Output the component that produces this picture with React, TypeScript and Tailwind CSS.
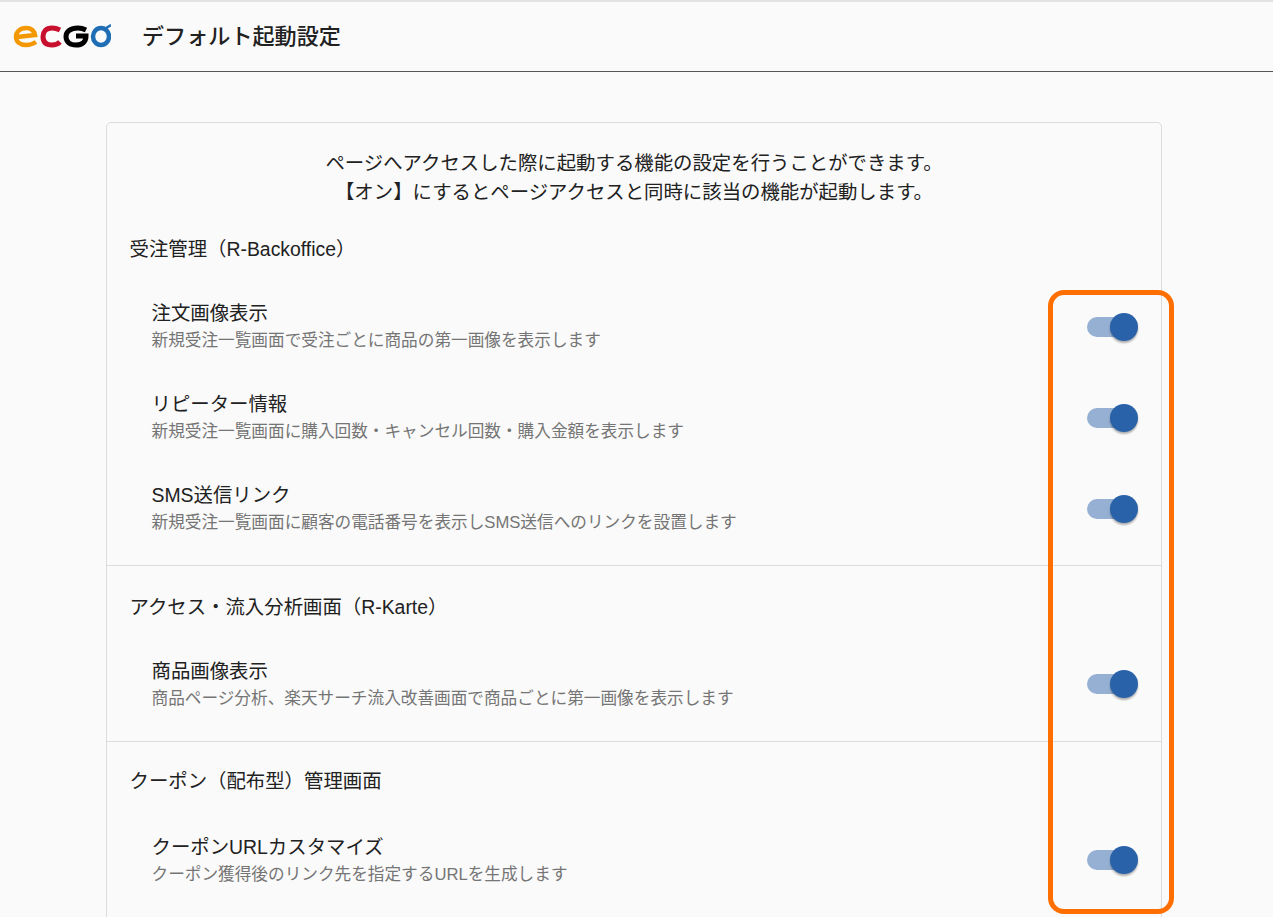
const Switch = () => (
  <div className="relative h-[20px] w-[51px] shrink-0">
    <div className="absolute left-[0px] top-[0px] h-[20px] w-[46px] rounded-full bg-[#95b0d3]" />
    <div className="absolute left-[23px] top-[-4px] h-[28px] w-[28px] rounded-full bg-[#2962a8] shadow-[0_2px_2px_rgba(0,0,0,0.3)]" />
  </div>
);

const Item = ({ title, desc, h = "h-[91px]", pt = "pt-[1px]" }: { title: string; desc: string; h?: string; pt?: string }) => (
  <div className={`flex ${h} items-start justify-between pl-[44.500px] pr-[23px]`}>
    <div className={`min-w-0 ${pt}`}>
      <div className="text-[19.4px] leading-[26px] text-[#212121]">{title}</div>
      <div className="mt-[3px] text-[16.65px] leading-[24px] text-[#757575]">{desc}</div>
    </div>
    <div className="mt-[17px]"><Switch /></div>
  </div>
);

const Heading = ({ children }: { children: string }) => (
  <div className="pl-[22.500px] text-[19.4px] leading-[26px] text-[#212121]">{children}</div>
);

export default function App() {
  return (
    <div
      className="relative h-[917px] overflow-hidden bg-[#fafafa]"
      style={{ fontFamily: '"Liberation Sans","Noto Sans CJK JP",sans-serif' }}
    >
      <header className="flex h-[72px] items-center border-t-[2px] border-b border-t-[#e2e2e0] border-b-[#555555] pl-[13px]">
        <svg width="98" height="26" viewBox="0 0 98 26" className="mb-[3px] shrink-0">
          <path d="M4 15 L22 13 C21 8 17 6 13 6 C7 6 3 10 3 14.500 C3 20 7 23 13 23 C17 23 20 22 23 20" fill="none" stroke="#f39800" strokeWidth="4.500" />
          <path d="M47 8 C44 6.500 41 6 39 6 C33 6 30 10 30 14.500 C30 20 33 23 39 23 C42 23 45 22 47 20" fill="none" stroke="#c8102e" strokeWidth="5" />
          <path d="M73 8 C70 6.500 68 6 65 6 C57 6 53 10 53 14.500 C53 20 57 23 63 23 C69 23 73 20 73 14 H63" fill="none" stroke="#000" strokeWidth="5" />
          <ellipse cx="88" cy="14.500" rx="8" ry="8.500" fill="none" stroke="#1f6db5" strokeWidth="4.500" />
          <path d="M90 8 L98 3" stroke="#1f6db5" strokeWidth="2.500" />
        </svg>
        <h1 className="ml-[31px] text-[22.1px] font-medium text-[#212121]">デフォルト起動設定</h1>
      </header>
      <main className="pl-[106px] pt-[50px]">
        <div className="w-[1056px] rounded-[5px] border border-[#dcdcdc] pb-[40px]">
          <div className="pt-[26px] text-center text-[19.4px] leading-[29px] text-[#212121]">
            <p>ページへアクセスした際に起動する機能の設定を行うことができます。</p>
            <p>【オン】にするとページアクセスと同時に該当の機能が起動します。</p>
          </div>
          <div className="mt-[29px]"><Heading>受注管理（R-Backoffice）</Heading></div>
          <div className="mt-[38px] border-b border-[#dcdcdc]">
            <Item pt="pt-0" title="注文画像表示" desc="新規受注一覧画面で受注ごとに商品の第一画像を表示します" />
            <Item pt="pt-0" title="リピーター情報" desc="新規受注一覧画面に購入回数・キャンセル回数・購入金額を表示します" />
            <Item pt="pt-0" title="SMS送信リンク" desc="新規受注一覧画面に顧客の電話番号を表示しSMS送信へのリンクを設置します" h="h-[83px]" />
          </div>
          <div className="mt-[28px]"><Heading>アクセス・流入分析画面（R-Karte）</Heading></div>
          <div className="mt-[37px] border-b border-[#dcdcdc]">
            <Item title="商品画像表示" desc="商品ページ分析、楽天サーチ流入改善画面で商品ごとに第一画像を表示します" h="h-[84px]" />
          </div>
          <div className="mt-[26px]"><Heading>クーポン（配布型）管理画面</Heading></div>
          <div className="mt-[39px]">
            <Item title="クーポンURLカスタマイズ" desc="クーポン獲得後のリンク先を指定するURLを生成します" />
          </div>
        </div>
      </main>
      <div className="absolute left-[1048px] top-[290px] h-[624px] w-[126px] rounded-[16px] border-[5px] border-[#ff6f00]" />
    </div>
  );
}
